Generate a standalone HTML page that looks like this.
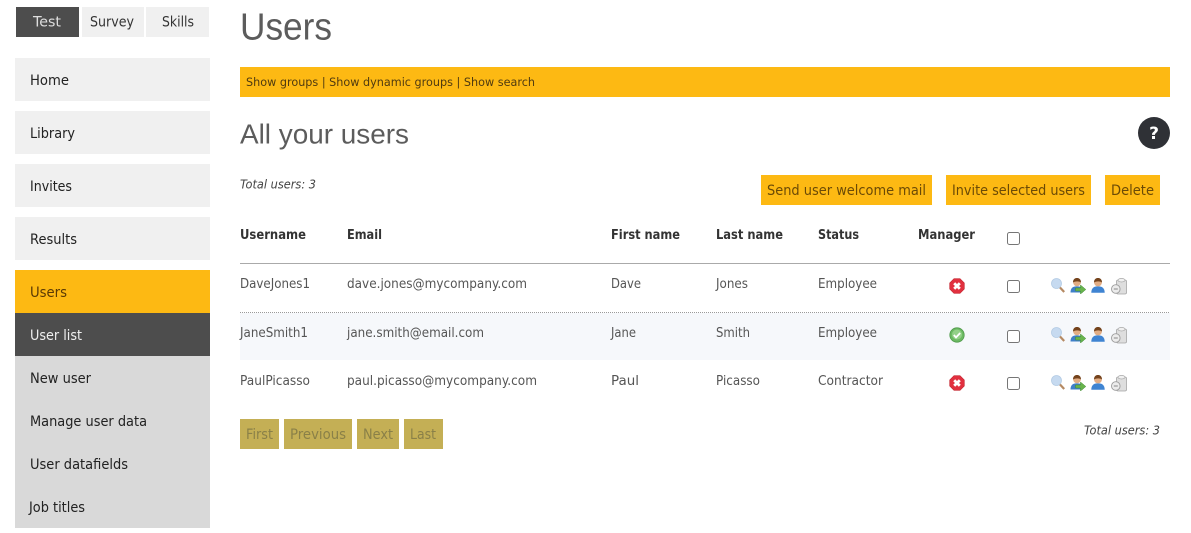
<!DOCTYPE html>
<html><head><meta charset="utf-8"><title>Users</title>
<style>
html,body{margin:0;padding:0;background:#fff;width:1191px;height:533px;overflow:hidden}
svg{display:block}
text{font-family:"DejaVu Sans","Liberation Sans",sans-serif;font-size:13px;fill:#333}
.n{font-size:14.5px;fill:#222}
.t{font-size:13.5px;fill:#555}
.b{font-weight:bold;font-size:13px;fill:#333}
.l{font-family:"Liberation Sans",sans-serif;fill:#5c5c5c}
.i{font-style:italic;font-size:12.5px;fill:#444}
.y{font-size:14.5px;fill:#6b4a06}
.p{font-size:14.5px;fill:#8a8048}
</style></head><body>
<svg width="1191" height="533" viewBox="0 0 1191 533" xmlns="http://www.w3.org/2000/svg">
<defs>
<symbol id="x" viewBox="0 0 16 16"><path d="M5 .7h6L15.300 5v6L11 15.300H5L.7 11V5z" fill="#e1303f" stroke="#c4242f" stroke-width=".6"/><path d="M5.200 5.200l5.600 5.600M10.800 5.200l-5.600 5.600" stroke="#fff" stroke-width="2.800"/></symbol>
<symbol id="ok" viewBox="0 0 16 16"><circle cx="8" cy="8" r="7.200" fill="#6cba63" stroke="#4f9a4a" stroke-width=".8"/><circle cx="8" cy="7.500" r="5" fill="#93d088"/><path d="M4.800 8l2.200 2.400 4.200-4.400" fill="none" stroke="#fff" stroke-width="1.800"/></symbol>
<symbol id="s" viewBox="0 0 14 15"><circle cx="5.500" cy="5.500" r="5" fill="#c6daf0" stroke="#b3cbe4" stroke-width=".8"/><path d="M9 9.500l4.200 4.500" stroke="#b58a63" stroke-width="2.200"/></symbol>
<symbol id="ua" viewBox="0 0 16 16"><path d="M.5 14.500C.5 10 3 8.300 7 8.300s6 1.700 6 6.200z" fill="#3f7fc9"/><circle cx="7" cy="4.500" r="3.800" fill="#e2ad84"/><path d="M3 4.500C3 .8 5.300 0 7 0s4 .8 4 4.500C9 3 5.500 3 3 4.500z" fill="#74431c"/><path d="M5.500 10h5V7l5.300 4.500L10.500 16v-3h-5z" fill="#68b44c" stroke="#3f8a30" stroke-width=".5"/></symbol>
<symbol id="u" viewBox="0 0 14 15"><path d="M.3 14.800C.3 10 3 8.300 7 8.300s6.700 1.700 6.700 6.500z" fill="#3f84d2"/><circle cx="7" cy="4.500" r="3.900" fill="#e2ad84"/><path d="M3 4.500C3 .8 5.300 0 7 0s4 .8 4 4.500C9 3 5.500 3 3 4.500z" fill="#74431c"/></symbol>
<symbol id="d" viewBox="0 0 16 17"><rect x="5.500" y="2" width="10" height="14" rx="1.500" fill="#dedede" stroke="#a5a5a5" stroke-width=".8"/><ellipse cx="10.500" cy="2.200" rx="3.500" ry="1.800" fill="#f0f0f0" stroke="#aaa" stroke-width=".7"/><circle cx="4.800" cy="11" r="4.300" fill="#ececec" stroke="#9b9b9b" stroke-width=".9"/><path d="M2.800 11h4" stroke="#888"/></symbol>
</defs>

<rect x="16" y="7" width="63" height="30" fill="#4d4d4d"/>
<rect x="82" y="7" width="62" height="30" fill="#f0f0f0"/>
<rect x="146" y="7" width="63" height="30" fill="#f0f0f0"/>
<text x="33" y="26.500" class="n" style="fill:#dedede" textLength="28" lengthAdjust="spacingAndGlyphs">Test</text>
<text x="90" y="26.500" class="n" style="fill:#333" textLength="44" lengthAdjust="spacingAndGlyphs">Survey</text>
<text x="162" y="26.500" class="n" style="fill:#333" textLength="32" lengthAdjust="spacingAndGlyphs">Skills</text>

<rect x="15" y="58" width="195" height="43" fill="#f0f0f0"/>
<rect x="15" y="111" width="195" height="43" fill="#f0f0f0"/>
<rect x="15" y="164" width="195" height="43" fill="#f0f0f0"/>
<rect x="15" y="217" width="195" height="43" fill="#f0f0f0"/>
<rect x="15" y="270" width="195" height="43" fill="#fdb913"/>
<rect x="15" y="313" width="195" height="43" fill="#4d4d4d"/>
<rect x="15" y="356" width="195" height="172" fill="#d9d9d9"/>
<text x="30" y="85" class="n" textLength="39" lengthAdjust="spacingAndGlyphs">Home</text>
<text x="30" y="138" class="n" textLength="45" lengthAdjust="spacingAndGlyphs">Library</text>
<text x="30" y="191" class="n" textLength="42" lengthAdjust="spacingAndGlyphs">Invites</text>
<text x="30" y="244" class="n" textLength="47" lengthAdjust="spacingAndGlyphs">Results</text>
<text x="30" y="297" class="n" style="fill:#5a3a05" textLength="37" lengthAdjust="spacingAndGlyphs">Users</text>
<text x="30" y="340" class="n" style="fill:#eee" textLength="52" lengthAdjust="spacingAndGlyphs">User list</text>
<text x="30" y="383" class="n" textLength="61" lengthAdjust="spacingAndGlyphs">New user</text>
<text x="30" y="426" class="n" textLength="117" lengthAdjust="spacingAndGlyphs">Manage user data</text>
<text x="30" y="469" class="n" textLength="98" lengthAdjust="spacingAndGlyphs">User datafields</text>
<text x="29" y="512" class="n" textLength="56" lengthAdjust="spacingAndGlyphs">Job titles</text>

<text x="240" y="39.500" class="l" style="font-size:38px" textLength="92" lengthAdjust="spacingAndGlyphs">Users</text>
<rect x="240" y="67" width="930" height="30" fill="#fdb913"/>
<text x="246" y="86" style="font-size:11.500px;fill:#4f3a10" textLength="289" lengthAdjust="spacingAndGlyphs">Show groups | Show dynamic groups | Show search</text>
<text x="240" y="143.500" class="l" style="font-size:28px" textLength="169" lengthAdjust="spacingAndGlyphs">All your users</text>
<circle cx="1154" cy="133" r="16" fill="#2f3136"/>
<text x="1154" y="139" text-anchor="middle" style="font-size:17px;font-weight:bold;fill:#fff">?</text>

<text x="240" y="188.500" class="i" textLength="76" lengthAdjust="spacingAndGlyphs">Total users: 3</text>
<rect x="761" y="175" width="171" height="30" fill="#fdb913"/>
<rect x="946" y="175" width="145" height="30" fill="#fdb913"/>
<rect x="1105" y="175" width="55" height="30" fill="#fdb913"/>
<text x="767" y="195" class="y" textLength="159" lengthAdjust="spacingAndGlyphs">Send user welcome mail</text>
<text x="952" y="195" class="y" textLength="133" lengthAdjust="spacingAndGlyphs">Invite selected users</text>
<text x="1111" y="195" class="y" textLength="43" lengthAdjust="spacingAndGlyphs">Delete</text>

<text x="240" y="239" class="b" textLength="66" lengthAdjust="spacingAndGlyphs">Username</text>
<text x="347" y="239" class="b" textLength="35" lengthAdjust="spacingAndGlyphs">Email</text>
<text x="611" y="239" class="b" textLength="69" lengthAdjust="spacingAndGlyphs">First name</text>
<text x="716" y="239" class="b" textLength="67" lengthAdjust="spacingAndGlyphs">Last name</text>
<text x="818" y="239" class="b" textLength="41" lengthAdjust="spacingAndGlyphs">Status</text>
<text x="918" y="239" class="b" textLength="57" lengthAdjust="spacingAndGlyphs">Manager</text>
<rect x="1007.500" y="232.500" width="12" height="12" rx="2" fill="#fff" stroke="#767676"/>

<rect x="240" y="263" width="930" height="1" fill="#aaa"/>
<rect x="240" y="313" width="930" height="47" fill="#f6f8fb"/>
<line x1="240" y1="312.500" x2="1170" y2="312.500" stroke="#999" stroke-dasharray="1 1"/>

<text x="240" y="288" class="t" textLength="70" lengthAdjust="spacingAndGlyphs">DaveJones1</text>
<text x="347" y="288" class="t" textLength="180" lengthAdjust="spacingAndGlyphs">dave.jones@mycompany.com</text>
<text x="611" y="288" class="t" textLength="30" lengthAdjust="spacingAndGlyphs">Dave</text>
<text x="716" y="288" class="t" textLength="32" lengthAdjust="spacingAndGlyphs">Jones</text>
<text x="818" y="288" class="t" textLength="59" lengthAdjust="spacingAndGlyphs">Employee</text>

<text x="240" y="337" class="t" textLength="68" lengthAdjust="spacingAndGlyphs">JaneSmith1</text>
<text x="347" y="337" class="t" textLength="137" lengthAdjust="spacingAndGlyphs">jane.smith@email.com</text>
<text x="611" y="337" class="t" textLength="25" lengthAdjust="spacingAndGlyphs">Jane</text>
<text x="716" y="337" class="t" textLength="34" lengthAdjust="spacingAndGlyphs">Smith</text>
<text x="818" y="337" class="t" textLength="59" lengthAdjust="spacingAndGlyphs">Employee</text>

<text x="240" y="385" class="t" textLength="70" lengthAdjust="spacingAndGlyphs">PaulPicasso</text>
<text x="347" y="385" class="t" textLength="190" lengthAdjust="spacingAndGlyphs">paul.picasso@mycompany.com</text>
<text x="611" y="385" class="t" textLength="28" lengthAdjust="spacingAndGlyphs">Paul</text>
<text x="716" y="385" class="t" textLength="44" lengthAdjust="spacingAndGlyphs">Picasso</text>
<text x="818" y="385" class="t" textLength="65" lengthAdjust="spacingAndGlyphs">Contractor</text>

<use href="#x" x="949" y="278" width="16" height="16"/>
<use href="#ok" x="949" y="327" width="16" height="16"/>
<use href="#x" x="949" y="375" width="16" height="16"/>

<rect x="1007.500" y="280.500" width="12" height="12" rx="2" fill="#fff" stroke="#767676"/>
<rect x="1007.500" y="330.500" width="12" height="12" rx="2" fill="#fff" stroke="#767676"/>
<rect x="1007.500" y="377.500" width="12" height="12" rx="2" fill="#fff" stroke="#767676"/>

<use href="#s" x="1051" y="278" width="14" height="15"/><use href="#ua" x="1070" y="278" width="16" height="16"/><use href="#u" x="1091" y="278" width="14" height="15"/><use href="#d" x="1111" y="278" width="16" height="17"/>
<use href="#s" x="1051" y="327" width="14" height="15"/><use href="#ua" x="1070" y="327" width="16" height="16"/><use href="#u" x="1091" y="327" width="14" height="15"/><use href="#d" x="1111" y="327" width="16" height="17"/>
<use href="#s" x="1051" y="375" width="14" height="15"/><use href="#ua" x="1070" y="375" width="16" height="16"/><use href="#u" x="1091" y="375" width="14" height="15"/><use href="#d" x="1111" y="375" width="16" height="17"/>

<rect x="240" y="419" width="39" height="30" fill="#c4af55"/>
<rect x="284" y="419" width="68" height="30" fill="#c4af55"/>
<rect x="357" y="419" width="42" height="30" fill="#c4af55"/>
<rect x="404" y="419" width="39" height="30" fill="#c4af55"/>
<text x="246" y="439" class="p" textLength="27" lengthAdjust="spacingAndGlyphs">First</text>
<text x="290" y="439" class="p" textLength="56" lengthAdjust="spacingAndGlyphs">Previous</text>
<text x="363" y="439" class="p" textLength="30" lengthAdjust="spacingAndGlyphs">Next</text>
<text x="410" y="439" class="p" textLength="26" lengthAdjust="spacingAndGlyphs">Last</text>
<text x="1084" y="434.500" class="i" textLength="76" lengthAdjust="spacingAndGlyphs">Total users: 3</text>
</svg>
</body></html>
